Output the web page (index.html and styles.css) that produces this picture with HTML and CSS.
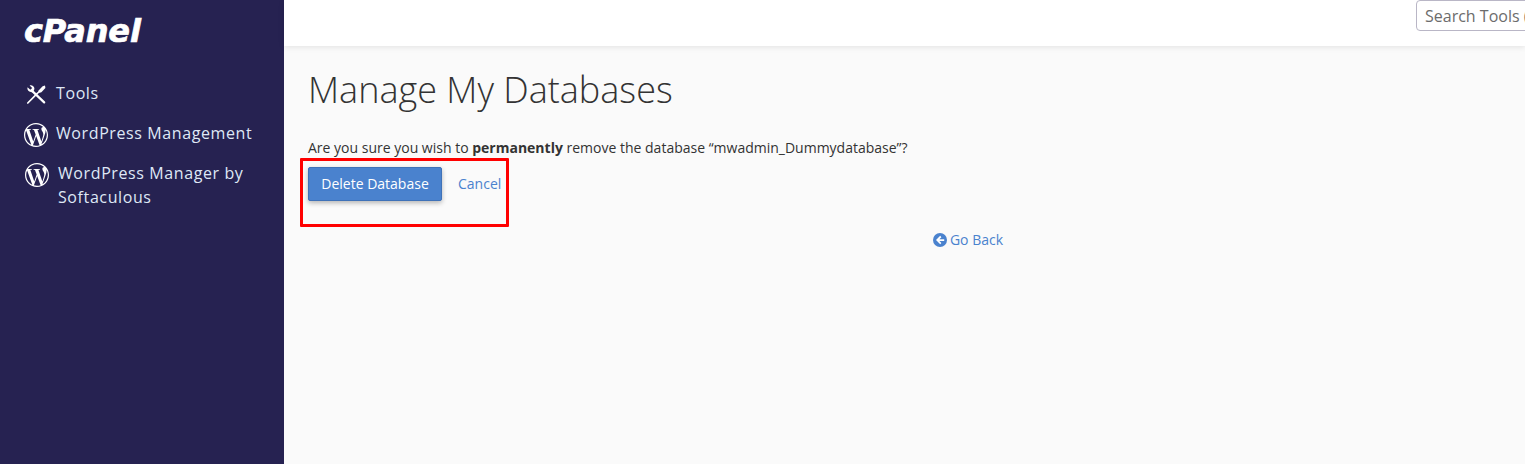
FILE: index.html
```html
<!DOCTYPE html>
<html lang="en">
<head>
<meta charset="utf-8">
<title>Manage My Databases - cPanel</title>
<link rel="stylesheet" href="styles.css">
</head>
<body>
<div class="page">
  <aside class="sidebar">
    <div class="logo">cPanel</div>
    <nav class="nav">
      <a class="nav-item" href="#">
        <svg class="nav-icon" viewBox="0 0 24 24" fill="none" stroke="#fff">
          <path d="M8.6 10.4 20.2 21.4" stroke-width="2.2" stroke-linecap="round"/>
          <path d="M3.6 6.2 6.3 8.8 8.2 7 5.6 4.4C7.8 3.6 10.4 5.2 10.4 7.6 10.4 8.4 10.2 9 9.8 9.6L8.6 11.4 7 10.9C4.8 11 2.8 8.6 3.6 6.2Z" fill="#fff" stroke="none"/>
          <path d="M3.8 22 13.6 12.2" stroke-width="1.7" stroke-linecap="round"/>
          <path d="M13.2 12.6 14.6 9.4 18.6 5.2 21 4.6 21.4 7 17.4 11.2Z" fill="#fff" stroke="none"/>
        </svg>
        <span>Tools</span>
      </a>
      <a class="nav-item" href="#">
        <svg class="nav-icon wp" viewBox="0 0 24 24"><path fill="#fff" d="M21.469 6.825c.84 1.537 1.318 3.3 1.318 5.175 0 3.979-2.156 7.456-5.363 9.325l3.295-9.527c.615-1.54.82-2.771.82-3.864 0-.405-.026-.78-.07-1.11m-7.981.105c.647-.03 1.232-.105 1.232-.105.582-.075.514-.93-.067-.899 0 0-1.755.135-2.88.135-1.064 0-2.85-.15-2.85-.15-.585-.03-.661.855-.075.885 0 0 .54.061 1.125.09l1.68 4.605-2.37 7.08L5.354 6.9c.649-.03 1.234-.1 1.234-.1.585-.075.516-.93-.065-.896 0 0-1.746.138-2.874.138-.2 0-.438-.008-.69-.015C4.911 3.15 8.235 1.215 12 1.215c2.809 0 5.365 1.072 7.286 2.833-.046-.003-.091-.009-.141-.009-1.06 0-1.812.923-1.812 1.914 0 .89.513 1.643 1.06 2.531.411.72.89 1.643.89 2.977 0 .915-.354 1.994-.821 3.479l-1.075 3.585-3.9-11.61.001.014zM12 22.784c-1.059 0-2.081-.153-3.048-.437l3.237-9.406 3.315 9.087c.024.053.05.101.078.149-1.12.393-2.325.609-3.582.609M1.211 12c0-1.564.336-3.05.935-4.39L7.29 21.709C3.694 19.96 1.212 16.271 1.211 12M12 0C5.385 0 0 5.385 0 12s5.385 12 12 12 12-5.385 12-12S18.615 0 12 0"/></svg>
        <span>WordPress Management</span>
      </a>
      <a class="nav-item shifted" href="#">
        <svg class="nav-icon wp" viewBox="0 0 24 24"><path fill="#fff" d="M21.469 6.825c.84 1.537 1.318 3.3 1.318 5.175 0 3.979-2.156 7.456-5.363 9.325l3.295-9.527c.615-1.54.82-2.771.82-3.864 0-.405-.026-.78-.07-1.11m-7.981.105c.647-.03 1.232-.105 1.232-.105.582-.075.514-.93-.067-.899 0 0-1.755.135-2.88.135-1.064 0-2.85-.15-2.85-.15-.585-.03-.661.855-.075.885 0 0 .54.061 1.125.09l1.68 4.605-2.37 7.08L5.354 6.9c.649-.03 1.234-.1 1.234-.1.585-.075.516-.93-.065-.896 0 0-1.746.138-2.874.138-.2 0-.438-.008-.69-.015C4.911 3.15 8.235 1.215 12 1.215c2.809 0 5.365 1.072 7.286 2.833-.046-.003-.091-.009-.141-.009-1.06 0-1.812.923-1.812 1.914 0 .89.513 1.643 1.06 2.531.411.72.89 1.643.89 2.977 0 .915-.354 1.994-.821 3.479l-1.075 3.585-3.9-11.61.001.014zM12 22.784c-1.059 0-2.081-.153-3.048-.437l3.237-9.406 3.315 9.087c.024.053.05.101.078.149-1.12.393-2.325.609-3.582.609M1.211 12c0-1.564.336-3.05.935-4.39L7.29 21.709C3.694 19.96 1.212 16.271 1.211 12M12 0C5.385 0 0 5.385 0 12s5.385 12 12 12 12-5.385 12-12S18.615 0 12 0"/></svg>
        <span>WordPress Manager by Softaculous</span>
      </a>
    </nav>
  </aside>
  <div class="main">
    <header class="topbar">
      <input class="search" type="text" placeholder="Search Tools (/)">
    </header>
    <main class="content">
      <h1 class="title">Manage My Databases</h1>
      <p class="question">Are you sure you wish to <strong>permanently</strong> remove the database “mwadmin_Dummydatabase”?</p>
      <div class="actions">
        <button class="btn" type="button">Delete Database</button>
        <a class="link cancel" href="#">Cancel</a>
        <div class="highlight"></div>
      </div>
      <div class="back">
        <a class="link back-link" href="#">
          <svg class="back-icon" viewBox="0 0 14 14"><circle cx="7" cy="7" r="7" fill="#4a82ce"/><path d="M7.2 2.8 3 7l4.2 4.2 1.2-1.2-2-2h4.8V6.2H6.4l2-2Z" fill="#fff"/></svg>
          <span>Go Back</span>
        </a>
      </div>
    </main>
  </div>
</div>
</body>
</html>
```
FILE: styles.css
```css
* { box-sizing: border-box; }
html, body { margin: 0; height: 100%; overflow: hidden; }
body { font-family: "Open Sans", sans-serif; font-size: 14px; color: #333; background: #fafafa; }
.page { display: flex; height: 464px; width: 1525px; overflow: hidden; }

.sidebar { flex: 0 0 284px; background: #262251; padding: 10px 24px 0; }
.logo {
  font-family: "DejaVu Sans", sans-serif;
  font-size: 32px; font-weight: 700; font-style: italic;
  line-height: 42px; color: #fff; letter-spacing: -.1px;
  -webkit-text-stroke: .7px #fff;
}
.nav { display: flex; flex-direction: column; gap: 16px; margin-top: 29px; }
.nav-item {
  display: flex; align-items: flex-start; gap: 8px;
  color: #dfe8f6; text-decoration: none;
  font-size: 16px; line-height: 24px; letter-spacing: .6px;
}
.nav-icon { flex: 0 0 24px; width: 24px; height: 24px; }
.nav-icon.wp { transform: translateY(2px); }
.nav-item.shifted { padding-left: 1px; gap: 9px; }

.main { flex: 0 0 1241px; display: flex; flex-direction: column; min-width: 0; }
.topbar {
  height: 46px; flex: 0 0 46px; background: #fff;
  box-shadow: 0 1px 6px rgba(0,0,0,.1);
  padding: 0 0 0 1132px; position: relative; z-index: 1;
}
.search {
  display: block; width: 200px; height: 31px; margin-top: 0;
  border: 1px solid #b9b6c6; border-radius: 4px; background: #fff;
  padding: 0 8px; font: 16px "Open Sans", sans-serif; letter-spacing: 0;
}
.search::placeholder { color: #6c6c6c; opacity: 1; }

.content { width: 1344px; padding: 0 0 0 24px; flex: 1; }
.title {
  margin: 19px 0 0; font-size: 36px; font-weight: 300; line-height: 49px; color: #333;
}
.question { margin: 24px 0 0; line-height: 20px; color: #333; }
.question strong { font-weight: 700; }
.actions { position: relative; display: flex; align-items: center; gap: 16px; margin-top: 9px; height: 34px; }
.btn {
  height: 34px; width: 134px; padding: 0 0 2px;
  background: #4a82ce; color: #fff; border: 1px solid #3f72b8; border-radius: 2px;
  font: 14px "Open Sans", sans-serif;
  box-shadow: 0 2px 5px rgba(0,0,0,.28);
}
.link { color: #4a82ce; text-decoration: none; }
.cancel { padding-bottom: 2px; }
.highlight {
  position: absolute; left: -8px; top: -9px; width: 209px; height: 69px;
  border: 3px solid #f00; border-radius: 1px;
}
.back { margin-top: 29px; text-align: center; line-height: 20px; }
.back-link { display: inline-flex; align-items: center; gap: 3px; }
.back-icon { width: 14px; height: 14px; }
```
